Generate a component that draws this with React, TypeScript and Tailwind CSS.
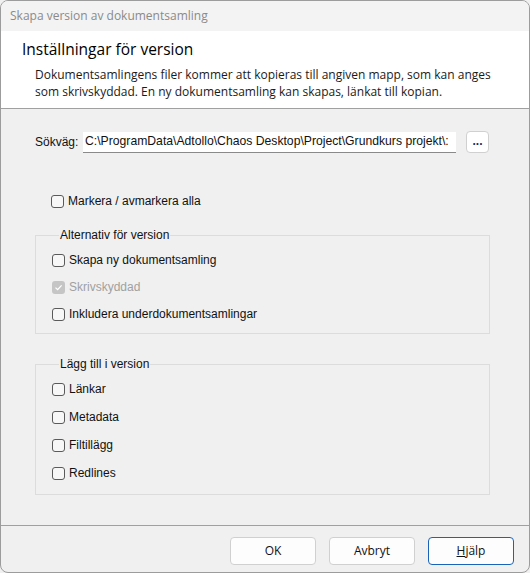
import React from "react";

const font = { fontFamily: '"Liberation Sans", Arial, sans-serif' };
const ui = { fontFamily: '"Open Sans", "Liberation Sans", sans-serif' };

function Box({ checked = false, disabled = false }: { checked?: boolean; disabled?: boolean }) {
  if (disabled && checked) {
    return (
      <span className="w-[13px] h-[13px] rounded-[3px] bg-[#c5c5c5] flex items-center justify-center shrink-0">
        <svg width="9" height="9" viewBox="0 0 9 9">
          <path d="M1.5 4.6 L3.6 6.6 L7.6 2.4" stroke="#ffffff" strokeWidth="1.3" fill="none" />
        </svg>
      </span>
    );
  }
  return <span className="w-[13px] h-[13px] rounded-[3px] border border-[#5a5a5a] bg-[#f7f7f7] shrink-0" />;
}

function Check({ label, checked, disabled }: { label: string; checked?: boolean; disabled?: boolean }) {
  return (
    <div className="flex items-center gap-[4px] h-[16px]">
      <Box checked={checked} disabled={disabled} />
      <span className={disabled ? "text-[#a0a0a0]" : "text-[#111]"}>{label}</span>
    </div>
  );
}

export default function App() {
  return (
    <div className="w-[530px] h-[573px] bg-[#f0f0f0] text-[12px] text-[#111]" style={font}>
      <div className="w-[530px] h-[573px] border border-[#9c9c9c] rounded-[8px] overflow-hidden flex flex-col">
        <div className="h-[30px] shrink-0 bg-[#f3f3f3] pl-[9px] flex items-center text-[12px] text-[#8a8a8a]" style={ui}>
          Skapa version av dokumentsamling
        </div>
        <div className="h-[78px] shrink-0 bg-white border-b border-[#a0a0a0] flex flex-col" style={ui}>
          <div className="pl-[21px] pt-[8px] text-[15.5px] leading-[20px] text-black">Inställningar för version</div>
          <div className="pl-[34px] pt-[7px] text-[12px] leading-[17px] text-[#1a1a1a]">
            Dokumentsamlingens filer kommer att kopieras till angiven mapp, som kan anges
            <br />
            som skrivskyddad. En ny dokumentsamling kan skapas, länkat till kopian.
          </div>
        </div>
        <div className="flex-1 flex flex-col pl-[34px] pr-[40px]">
          <div className="flex items-center mt-[22px] h-[22px]">
            <span className="w-[48px]">Sökväg:</span>
            <div className="w-[373px] h-[21px] bg-white border-b border-[#8a8a8a] pl-[2px] flex items-center overflow-hidden whitespace-nowrap text-[#111] text-[12.2px]">
              C:\ProgramData\Adtollo\Chaos Desktop\Project\Grundkurs projekt\:
            </div>
            <div className="ml-[10px] w-[23px] h-[22px] bg-white border border-[#d0d0d0] rounded-[4px] flex items-center justify-center text-[#1a2a60] font-bold leading-none pb-[2px]">
              ...
            </div>
          </div>
          <div className="mt-[40px] pl-[16px]">
            <Check label="Markera / avmarkera alla" />
          </div>
          <fieldset className="mt-[17px] border border-[#dcdcdc] h-[108px] w-[455px] pl-[16px] pt-[8px]">
            <legend className="ml-[7px] px-[1px]">Alternativ för version</legend>
            <div className="flex flex-col gap-[11px]">
              <Check label="Skapa ny dokumentsamling" />
              <Check label="Skrivskyddad" checked disabled />
              <Check label="Inkludera underdokumentsamlingar" />
            </div>
          </fieldset>
          <fieldset className="mt-[21px] border border-[#dcdcdc] h-[140px] w-[455px] pl-[16px] pt-[8px]">
            <legend className="ml-[7px] px-[1px]">Lägg till i version</legend>
            <div className="flex flex-col gap-[12px]">
              <Check label="Länkar" />
              <Check label="Metadata" />
              <Check label="Filtillägg" />
              <Check label="Redlines" />
            </div>
          </fieldset>
        </div>
        <div className="h-[47px] shrink-0 border-t border-[#a0a0a0] flex items-start justify-end gap-[13px] pr-[15px] pt-[11px]" style={ui}>
          <div className="w-[86px] h-[28px] bg-[#fdfdfd] border border-[#d0d0d0] rounded-[4px] flex items-center justify-center">OK</div>
          <div className="w-[86px] h-[28px] bg-[#fdfdfd] border border-[#d0d0d0] rounded-[4px] flex items-center justify-center">Avbryt</div>
          <div className="w-[86px] h-[28px] bg-[#fdfdfd] border border-[#1a64b8] rounded-[4px] flex items-center justify-center">
            <span><span className="underline">H</span>jälp</span>
          </div>
        </div>
      </div>
    </div>
  );
}
